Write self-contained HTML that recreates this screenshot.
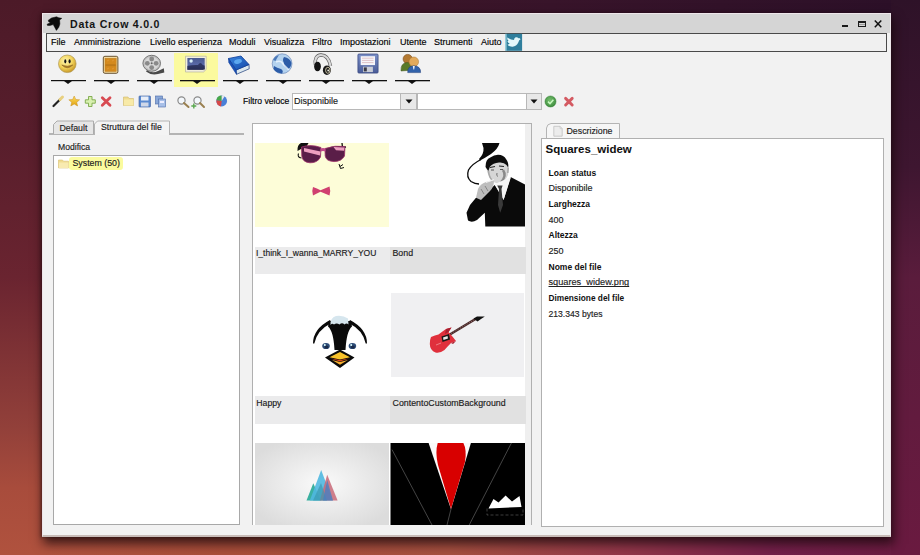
<!DOCTYPE html>
<html><head><meta charset="utf-8">
<style>
*{margin:0;padding:0;box-sizing:border-box}
html,body{width:920px;height:555px;overflow:hidden}
body{position:relative;font-family:"Liberation Sans",sans-serif;background:#5a1c34}
.a{position:absolute}
.t{position:absolute;white-space:nowrap;font-family:"Liberation Sans",sans-serif;color:#1a1a1a;-webkit-text-stroke:0.15px currentColor}
#bgL{left:0;top:0;width:42px;height:555px;background:linear-gradient(to bottom,#4c1a28 0%,#581e2c 25%,#6a2430 50%,#92403a 77%,#a84c3c 88%,#b0523e 100%)}
#bgR{left:891px;top:0;width:29px;height:555px;background:linear-gradient(to bottom,#2e1228 0%,#3e1630 30%,#5a1c3c 50%,#6a1a40 100%)}
#bgT{left:42px;top:0;width:849px;height:13px;background:linear-gradient(to right,#4c1a28 0%,#3e1626 30%,#38142a 60%,#2c1028 100%)}
#bgB{left:42px;top:536px;width:849px;height:19px;background:linear-gradient(to right,#b0523e 0%,#aa4e3a 22%,#a65040 48%,#94384a 68%,#74204a 86%,#6c1c42 100%)}
#shB{left:42px;top:536px;width:855px;height:19px;background:linear-gradient(to bottom,rgba(40,15,12,.72) 0%,rgba(40,15,12,.38) 30%,rgba(40,15,12,.12) 70%,rgba(40,15,12,0) 100%)}
#shR{left:891px;top:13px;width:6px;height:523px;background:linear-gradient(to right,rgba(20,5,15,.7),rgba(20,5,15,0))}
#win{left:42px;top:13px;width:849px;height:524px;background:#f2f2f2;border:1px solid #eee6ea;border-bottom:2px solid #c8bcb8;box-shadow:2px 6px 10px 1px rgba(25,8,12,.75),-1px 0 3px rgba(25,8,12,.45)}
#title{left:43px;top:14px;width:847px;height:19px;background:#d5d5d5}
#menubar{left:46px;top:33px;width:841px;height:19px;background:#f0f0f0;border:1px solid #4a4a4a}
.menu{font-size:9px;top:37px;color:#000}
</style></head><body>
<div class="a" id="bgL"></div>
<div class="a" id="bgR"></div>
<div class="a" id="bgT"></div>
<div class="a" id="bgB"></div>




<div class="a" id="win"></div>
<div class="a" id="title"></div>
<!-- crow logo -->
<svg class="a" style="left:45px;top:15px" width="18" height="17" viewBox="45 15 18 17">
<path d="M47.5 25.4 L47.1 24.2 L50.4 22.7 L48.7 21.8 L48.3 20.2 L51.5 18 L56.5 16.8 L58.8 17.8 L61.8 18.3 L59.6 20.1 L59.9 24 L58.8 27.3 L56.4 30.4 L54.8 27.4 L53.2 24.6 L50 25.5 Z" fill="#0c0c0c" stroke="#0c0c0c" stroke-width="0.5" stroke-linejoin="round"/>
</svg>
<div class="t" style="left:70px;top:17.7px;font-size:10.6px;font-weight:bold;letter-spacing:0.75px;color:#141414;-webkit-text-stroke:0">Data Crow 4.0.0</div>
<!-- window buttons -->
<div class="a" style="left:842px;top:25px;width:6px;height:2px;background:#1a1a1a"></div>
<div class="a" style="left:857.5px;top:21px;width:8px;height:6px;border:1px solid #1a1a1a;border-top-width:2px"></div>
<div class="a" style="left:858.5px;top:24px;width:6px;height:1px;background:#9a9a9a"></div>
<svg class="a" style="left:873px;top:19px" width="10" height="10" viewBox="0 0 10 10"><path d="M1.8 1.5 L8.3 8.3 M8.3 1.5 L1.8 8.3" stroke="#111" stroke-width="1.5"/></svg>

<div class="a" id="menubar"></div>
<div class="t menu" style="left:51px">File</div>
<div class="t menu" style="left:74px">Amministrazione</div>
<div class="t menu" style="left:150px">Livello esperienza</div>
<div class="t menu" style="left:229px">Moduli</div>
<div class="t menu" style="left:264px">Visualizza</div>
<div class="t menu" style="left:312px">Filtro</div>
<div class="t menu" style="left:340px">Impostazioni</div>
<div class="t menu" style="left:400px">Utente</div>
<div class="t menu" style="left:434px">Strumenti</div>
<div class="t menu" style="left:481px">Aiuto</div>
<svg class="a" style="left:505px;top:33px" width="18" height="18" viewBox="505 33 18 18">
<rect x="505.3" y="33.8" width="16.8" height="17" fill="#2f7e9c"/>
<rect x="505.3" y="33.8" width="1.2" height="17" fill="#a8dce8"/>
<path d="M507.5 44.8 Q509 46.8 512.5 46.7 Q516.5 46.3 518.3 42.6 L519.2 40.2 L520.8 39.6 L519.6 39.1 L520.3 38.1 L518.6 38.3 Q517.4 36.9 515.7 37.3 Q513.9 38 514.1 40 Q510.6 39.8 507.2 37.5 Q507 39.7 508.6 40.9 L507.4 41 Q508 43 509.8 43.6 Q508.7 44.4 507.5 44.8 Z" fill="#e4f8fb"/>
</svg>


<!-- main toolbar -->
<div class="a" style="left:174px;top:53px;width:44px;height:34px;background:#fbfa9e"></div>
<svg class="a" style="left:44px;top:52px" width="390" height="36" viewBox="44 52 390 36">
<defs>
<radialGradient id="gSm" cx="40%" cy="35%" r="65%"><stop offset="0" stop-color="#fff6b0"/><stop offset="0.6" stop-color="#f2d35a"/><stop offset="1" stop-color="#c99a2a"/></radialGradient>
<radialGradient id="gGl" cx="40%" cy="35%" r="70%"><stop offset="0" stop-color="#cfe3f8"/><stop offset="0.5" stop-color="#5a8fd0"/><stop offset="1" stop-color="#2a4f98"/></radialGradient>
<linearGradient id="gImg" x1="0" y1="0" x2="0" y2="1"><stop offset="0" stop-color="#4a5a90"/><stop offset="0.6" stop-color="#5a6aa8"/><stop offset="1" stop-color="#1e2448"/></linearGradient>
<linearGradient id="gBk" x1="0" y1="0" x2="1" y2="1"><stop offset="0" stop-color="#3a86e0"/><stop offset="1" stop-color="#1248a8"/></linearGradient>
<linearGradient id="gFl" x1="0" y1="0" x2="0" y2="1"><stop offset="0" stop-color="#7c90c8"/><stop offset="1" stop-color="#4a5c98"/></linearGradient>
</defs>
<!-- underline bars with triangles -->
<g fill="#111">
<rect x="51" y="80" width="35" height="1.2"/><path d="M64 81 L72 81 L68 84 Z"/>
<rect x="94" y="80" width="35" height="1.3"/><path d="M107 81 L115 81 L111 84 Z"/>
<rect x="137" y="80" width="35" height="1.3"/><path d="M150 81 L158 81 L154 84 Z"/>
<rect x="180" y="80" width="35" height="1.3"/><path d="M193 81 L201 81 L197 84 Z"/>
<rect x="223" y="80" width="35" height="1.3"/><path d="M236 81 L244 81 L240 84 Z"/>
<rect x="266" y="80" width="35" height="1.3"/><path d="M279 81 L287 81 L283 84 Z"/>
<rect x="309" y="80" width="35" height="1.3"/><path d="M322 81 L330 81 L326 84 Z"/>
<rect x="352" y="80" width="35" height="1.3"/><path d="M365 81 L373 81 L369 84 Z"/>
<rect x="395" y="80" width="35" height="1.3"/><path d="M408 81 L416 81 L412 84 Z"/>
</g>
<!-- smiley -->
<circle cx="67.3" cy="63.8" r="8.8" fill="url(#gSm)" stroke="#b09850" stroke-width="0.7"/>
<ellipse cx="65.3" cy="61.3" rx="1.05" ry="2.1" fill="#151515"/><ellipse cx="69.6" cy="61.3" rx="1.05" ry="2.1" fill="#151515"/>
<path d="M61.8 65 Q67.3 70.5 72.8 65 Q67.3 67.5 61.8 65 Z" fill="#a87a28" stroke="#8a6020" stroke-width="0.6"/>
<!-- book brown -->
<rect x="103.3" y="56.3" width="14.6" height="17" rx="1.6" fill="#f0d8a0" stroke="#5a4424" stroke-width="0.9"/>
<rect x="105" y="58.2" width="11.2" height="13.3" fill="#d48a1e" stroke="#b87a20" stroke-width="0.4"/>
<path d="M105.5 64.7 H115.7 M105.5 65.6 H115.7" stroke="#a86a18" stroke-width="0.5"/>
<path d="M107 61 L109 60 M112 61 L114 60 M107 69 L109 68 M112 69 L114 68" stroke="#e8a040" stroke-width="0.6"/>
<!-- film reel -->
<path d="M147 70 Q152 74 158 71 L163.8 68.2 L164.3 72.4 L158 74 Q151 75.5 146 71.5 Z" fill="#4a4a4a"/>
<ellipse cx="151.7" cy="63.3" rx="8.8" ry="8" fill="#c4c4c4" stroke="#6a6a6a" stroke-width="0.9"/>
<ellipse cx="151.7" cy="63.3" rx="7" ry="6.3" fill="#d8d8d8"/>
<circle cx="151.7" cy="59" r="2.4" fill="#8a8a8a"/><circle cx="151.7" cy="67.6" r="2.4" fill="#8a8a8a"/>
<circle cx="147.3" cy="63.3" r="2.4" fill="#8a8a8a"/><circle cx="156.1" cy="63.3" r="2.4" fill="#8a8a8a"/>
<circle cx="151.7" cy="63.3" r="1" fill="#666"/>
<!-- image icon -->
<path d="M185.5 56.2 H206.2 V69.5 L203.5 72 H185.5 Z" fill="#f2efdc" stroke="#b8b4a0" stroke-width="0.7"/>
<rect x="187.4" y="58" width="17.3" height="11.7" fill="url(#gImg)"/>
<circle cx="191.1" cy="61" r="1.7" fill="#d8eef8"/>
<path d="M187.4 66 Q194 64.5 198 65 Q200 62 201.5 63.5 Q203 66 204.7 65.5 L204.7 69.7 L187.4 69.7 Z" fill="#2a3058" opacity="0.85"/>
<path d="M203.5 72 L203.5 69.5 L206.2 69.5 Z" fill="#d8d4c0"/>
<!-- blue book -->
<path d="M236 70 L249 64.5 L249.2 68.8 L236.5 74.3 Z" fill="#dce8ee" stroke="#1a3a78" stroke-width="0.7"/>
<path d="M228.5 58.5 L241 56 L249 64.5 L236 70 Z" fill="url(#gBk)" stroke="#0e3c98" stroke-width="0.8"/>
<path d="M228.5 58.5 L228.8 62.5 L236.5 74.3 L236 70 Z" fill="#1a52b8" stroke="#0e3c98" stroke-width="0.6"/>
<ellipse cx="238" cy="61.5" rx="4" ry="2.2" fill="#70c0ff" opacity="0.7" transform="rotate(-15 238 61.5)"/>
<!-- globe -->
<circle cx="282.1" cy="63.7" r="9.9" fill="#b4d2ee" stroke="#5a7ab0" stroke-width="0.6"/>
<path d="M284 57 Q290 58 291.5 63 Q291 68 288 69 Q284 67 284 63 Q282 60 284 57 Z" fill="#2c5ca8"/>
<path d="M274 66 Q277 68 281 69 Q284 71 282 73.5 Q276 73 273.5 69 Z" fill="#2c5ca8"/>
<path d="M273 60 Q275 56 279 55 Q277 58 275.5 61 Z" fill="#4a78b8"/>
<path d="M276 62 Q281 60 283 64 Q286 67 289 70" stroke="#f0f8ff" stroke-width="1.5" fill="none" opacity="0.8"/>
<!-- headphones -->
<path d="M315.5 65 Q314 55.5 321 55 Q328.5 55 330.5 66" stroke="#5a5a5a" stroke-width="3.4" fill="none"/>
<path d="M315.5 65 Q314 55.5 321 55 Q328.5 55 330.5 66" stroke="#d8d8d8" stroke-width="2.2" fill="none"/>
<ellipse cx="317.5" cy="66.5" rx="3.4" ry="4.8" fill="#141414"/>
<ellipse cx="326.9" cy="70.2" rx="4" ry="4.8" fill="#1a1a1a"/>
<ellipse cx="327.8" cy="70.3" rx="2.2" ry="3" fill="none" stroke="#d8d0b0" stroke-width="0.9"/>
<circle cx="328.2" cy="70.5" r="0.9" fill="#f0f0e0"/>
<!-- floppy -->
<rect x="357.9" y="54" width="20.2" height="19.1" rx="1" fill="url(#gFl)" stroke="#34447c" stroke-width="0.7"/>
<rect x="360.7" y="56.2" width="14.3" height="8.9" fill="#f6f6fa"/>
<path d="M362 58.2 H373.5 M362 60.4 H373.5 M362 62.6 H373.5" stroke="#c89098" stroke-width="0.5"/>
<rect x="363" y="66.7" width="9.9" height="5.4" fill="#c8ccd6"/>
<rect x="363.8" y="67.4" width="3" height="4" fill="#3a3a48"/>
<!-- people -->
<circle cx="407.7" cy="59" r="4.6" fill="#b47a32" stroke="#7a4a18" stroke-width="0.6"/>
<path d="M401 71 Q400.5 63 407 62.5 Q412.5 62.5 413 70 Z" fill="#5a7a28" stroke="#3a5018" stroke-width="0.5"/>
<circle cx="413.8" cy="61.8" r="4.8" fill="#e2aa5c" stroke="#a87430" stroke-width="0.5"/>
<path d="M407.7 72.6 Q407.5 66 413.8 65.8 Q420.8 66 420.6 72.6 Z" fill="#3262aa" stroke="#1a3a78" stroke-width="0.5"/>
<path d="M412.8 66 L414.8 66 L414.2 69.5 L413.4 69.5 Z" fill="#e8eef8"/>
</svg>


<!-- second toolbar -->
<svg class="a" style="left:50px;top:93px" width="180" height="16" viewBox="50 93 180 16">
<defs>
<linearGradient id="gStar" x1="0" y1="0" x2="0" y2="1"><stop offset="0" stop-color="#ffe060"/><stop offset="1" stop-color="#e0a010"/></linearGradient>
<radialGradient id="gPie" cx="40%" cy="35%" r="70%"><stop offset="0" stop-color="#ffffff"/><stop offset="1" stop-color="#888"/></radialGradient>
</defs>
<!-- wand -->
<path d="M53.5 106 L60 99.5" stroke="#222" stroke-width="2.2" stroke-linecap="round"/>
<path d="M60 99.5 L62.5 97" stroke="#e8d080" stroke-width="3" stroke-linecap="round"/>
<!-- star -->
<path d="M74.2 96 L75.8 99.5 L79.6 99.8 L76.7 102.3 L77.6 106 L74.2 104 L70.8 106 L71.7 102.3 L68.8 99.8 L72.6 99.5 Z" fill="url(#gStar)" stroke="#c89020" stroke-width="0.5"/>
<!-- plus -->
<path d="M88.5 96.5 H92 V99.8 H95.3 V103.2 H92 V106.5 H88.5 V103.2 H85.3 V99.8 H88.5 Z" fill="#d8f0b0" stroke="#7aa848" stroke-width="0.9"/>
<!-- red x -->
<path d="M102.3 97.8 L110 105.3 M110 97.8 L102.3 105.3" stroke="#d84a52" stroke-width="2.8" stroke-linecap="round"/>
<!-- folder -->
<path d="M123.5 97 H128 L129 98.5 H133.5 V105.5 H123.5 Z" fill="#f0dc90" stroke="#d0b868" stroke-width="0.6"/>
<rect x="124" y="99.5" width="9.5" height="6" fill="#f8eaa8"/>
<!-- floppy -->
<rect x="139" y="96" width="11.5" height="11" rx="0.8" fill="#5a8ad0" stroke="#3a5aa0" stroke-width="0.6"/>
<rect x="141" y="96.5" width="7.5" height="4" fill="#e8eef8"/>
<rect x="141" y="102.5" width="7.5" height="4" fill="#d0d8e8"/>
<!-- copy -->
<rect x="155.5" y="96" width="7" height="8" fill="#8aa8d8" stroke="#4a6aa8" stroke-width="0.6"/>
<rect x="158.5" y="99" width="7" height="8" fill="#a8c0e8" stroke="#4a6aa8" stroke-width="0.6"/>
<rect x="160" y="101" width="4" height="2" fill="#eef"/>
<!-- magnifier -->
<circle cx="181.5" cy="100.5" r="3.6" fill="#f4f8fc" stroke="#8a8a8a" stroke-width="1.2"/>
<path d="M184 103 L188.5 107" stroke="#9a8050" stroke-width="2" stroke-linecap="round"/>
<!-- magnifier plus -->
<circle cx="197.5" cy="100.5" r="3.6" fill="#f4f8fc" stroke="#8a8a8a" stroke-width="1.2"/>
<path d="M200 103 L204 107" stroke="#9a8050" stroke-width="2" stroke-linecap="round"/>
<path d="M193.8 103.5 V108.5 M191.3 106 H196.3" stroke="#5aa850" stroke-width="1.4"/>
<!-- pie -->
<circle cx="221.7" cy="101" r="5.4" fill="#4a80d8"/>
<path d="M221.7 101 L221.7 95.6 A5.4 5.4 0 0 0 216.4 100.2 Z" fill="#48a848"/>
<path d="M221.7 101 L216.4 100.2 A5.4 5.4 0 0 0 221 106.4 Z" fill="#d84848"/>
<path d="M221.7 101 L221.7 95.6 A5.4 5.4 0 0 1 224.5 96.4 Z" fill="#e8e8e8"/>
</svg>
<div class="t" style="left:243px;top:96px;font-size:8.6px;color:#000">Filtro veloce</div>
<!-- combo 1 -->
<div class="a" style="left:292px;top:93px;width:125px;height:17px;background:#fff;border:1px solid #b8b8b8"></div>
<div class="a" style="left:400px;top:93px;width:17px;height:17px;background:#e8e8e8;border:1px solid #b8b8b8"></div>
<svg class="a" style="left:405px;top:99px" width="8" height="5" viewBox="0 0 8 5"><path d="M0.5 0.5 H7.5 L4 4.5 Z" fill="#111"/></svg>
<div class="t" style="left:294px;top:96px;font-size:9px;color:#1a1a1a">Disponibile</div>
<!-- combo 2 -->
<div class="a" style="left:417px;top:93px;width:125px;height:17px;background:#fff;border:1px solid #b8b8b8"></div>
<div class="a" style="left:526px;top:93px;width:16px;height:17px;background:#e8e8e8;border:1px solid #b8b8b8"></div>
<svg class="a" style="left:530px;top:99px" width="8" height="5" viewBox="0 0 8 5"><path d="M0.5 0.5 H7.5 L4 4.5 Z" fill="#111"/></svg>
<!-- ok / cancel -->
<svg class="a" style="left:543px;top:94px" width="35" height="15" viewBox="543 94 35 15">
<defs><radialGradient id="gOk" cx="45%" cy="40%" r="65%"><stop offset="0" stop-color="#78c070"/><stop offset="1" stop-color="#3a8a3a"/></radialGradient></defs>
<circle cx="550.5" cy="101.5" r="5.5" fill="url(#gOk)" stroke="#2a7a2a" stroke-width="0.5"/>
<path d="M548 101.6 L550 103.6 L553.4 99.8" stroke="#c8f8c0" stroke-width="1.5" fill="none"/>
<path d="M565.6 98.4 L572.2 105 M572.2 98.4 L565.6 105" stroke="#d45a62" stroke-width="2.9" stroke-linecap="round"/>
</svg>


<!-- left tabs -->
<div class="a" style="left:49px;top:133px;width:195px;height:2px;background:#b4b4b4"></div>
<svg class="a" style="left:49px;top:119px" width="125" height="17" viewBox="49 119 125 17">
<path d="M53.5 134 V124.5 L57 121 H93.5 V134" fill="#e6e6e6" stroke="#acacac" stroke-width="1"/>
<path d="M94.5 134 V124 L97.5 121 H169.5 V134" fill="#f4f4f4" stroke="#b4b4b4" stroke-width="1"/>
</svg>
<div class="a" style="left:95px;top:133px;width:74px;height:2px;background:#f4f4f4"></div>
<div class="t" style="left:59.5px;top:123px;font-size:8.8px;color:#222">Default</div>
<div class="t" style="left:101px;top:122.3px;font-size:8.7px;color:#1a1a1a">Struttura del file</div>
<div class="t" style="left:58px;top:141.5px;font-size:8.6px;color:#1a1a1a">Modifica</div>
<!-- tree box -->
<div class="a" style="left:53px;top:155px;width:187px;height:370px;background:#fff;border:1px solid #a8a8a8"></div>
<div class="a" style="left:69px;top:156.5px;width:54px;height:13px;background:#fbfb9e;border-radius:3px"></div>
<svg class="a" style="left:58px;top:159px" width="12" height="10" viewBox="0 0 12 10">
<path d="M0.5 1 H4.5 L5.5 2.2 H10.5 V9 H0.5 Z" fill="#f0dc90" stroke="#d8c070" stroke-width="0.6"/>
<rect x="1" y="3.5" width="9.5" height="5.5" fill="#f8eab0"/>
</svg>
<div class="t" style="left:72.5px;top:158px;font-size:8.8px;color:#1a1a1a">System (50)</div>

<!-- center panel -->
<div class="a" style="left:252px;top:123px;width:280px;height:402px;background:#fff;border:1px solid #b0b0b0;border-bottom:none"></div>
<div class="a" style="left:525px;top:124px;width:6px;height:401px;background:#efefef"></div>
<!-- right panel -->
<svg class="a" style="left:540px;top:122px" width="90" height="18" viewBox="540 122 90 18">
<path d="M546.5 139 V128 Q547 124 551 123.5 H619.5 V139" fill="#f6f6f6" stroke="#b4b4b4" stroke-width="1"/>
<path d="M553.8 126.3 H560 L562.2 128.6 V136.2 H553.8 Z" fill="#ececec" stroke="#c0c0c0" stroke-width="0.8"/>
<path d="M560 126.3 V128.6 H562.2" fill="none" stroke="#c8c8c8" stroke-width="0.6"/>
</svg>
<div class="a" style="left:541px;top:138px;width:343px;height:389px;background:#fff;border:1px solid #b0b0b0"></div>
<div class="t" style="left:566.5px;top:126px;font-size:8.8px;color:#222">Descrizione</div>
<div class="t" style="left:545.5px;top:143px;font-size:11.5px;font-weight:bold;color:#111;-webkit-text-stroke:0">Squares_widew</div>
<div class="t" style="left:548.5px;top:167.5px;font-size:8.5px;font-weight:bold;color:#111;-webkit-text-stroke:0">Loan status</div>
<div class="t" style="left:548.5px;top:183px;font-size:9px;color:#222">Disponibile</div>
<div class="t" style="left:548.5px;top:199px;font-size:8.5px;font-weight:bold;color:#111;-webkit-text-stroke:0">Larghezza</div>
<div class="t" style="left:548.5px;top:214.5px;font-size:9px;color:#222">400</div>
<div class="t" style="left:548.5px;top:230px;font-size:8.5px;font-weight:bold;color:#111;-webkit-text-stroke:0">Altezza</div>
<div class="t" style="left:548.5px;top:246px;font-size:9px;color:#222">250</div>
<div class="t" style="left:548.5px;top:261.5px;font-size:8.5px;font-weight:bold;color:#111;-webkit-text-stroke:0">Nome del file</div>
<div class="t" style="left:548.5px;top:277px;font-size:9.2px;color:#222;text-decoration:underline;text-decoration-skip-ink:none;text-underline-offset:1px">squares_widew.png</div>
<div class="t" style="left:548.5px;top:293px;font-size:8.3px;font-weight:bold;color:#111;-webkit-text-stroke:0">Dimensione del file</div>
<div class="t" style="left:548.5px;top:308.5px;font-size:8.6px;color:#222">213.343 bytes</div>


<!-- center images -->
<svg class="a" style="left:253px;top:124px" width="278" height="401" viewBox="253 124 278 401">
<defs>
<radialGradient id="gMt" cx="50%" cy="50%" r="60%"><stop offset="0" stop-color="#fafafa"/><stop offset="1" stop-color="#dcdcdc"/></radialGradient>
</defs>
<!-- cell 1 : glasses -->
<rect x="255" y="143" width="134" height="84" fill="#fdfdd8"/>
<path d="M297.5 151 Q297 145 301 143 L308.5 143 L306 147.5 L301 149 Z" fill="#111"/>
<path d="M298.5 153.5 Q297 157.5 301.5 158" stroke="#111" stroke-width="1.1" fill="none"/>
<path d="M342 143 L342.5 147.5 L346 147" stroke="#111" stroke-width="1.3" fill="none"/>
<path d="M339 164 L340.5 168.5 L344 167.5 M340 166.5 L343 164.5" stroke="#111" stroke-width="1" fill="none"/>
<path d="M301.5 147 Q311 144 321 147.5 L320.5 157 Q317.5 163 310 162.8 Q302.5 162.3 301.8 156 Z" fill="#5a1e48" stroke="#9a2e68" stroke-width="0.8"/>
<path d="M325 148.5 Q335 145 345 146.5 L344.5 156 Q341.5 161.5 334 161.6 Q326 161.2 325.2 156 Z" fill="#5a1e48" stroke="#9a2e68" stroke-width="0.8"/>
<path d="M320.5 148.5 Q323 147.5 325.5 148.5 L325.5 151.5 Q323 150.5 320.5 151.5 Z" fill="#c04888"/>
<path d="M304 148 L320.5 151.5 L320 155.5 L304 151.5 Z" fill="#eea0c0"/>
<path d="M333.5 147 L344.5 147.5 L344 150.8 L336 150.2 Z" fill="#eea0c0"/>
<path d="M313 187 Q317 188.5 320.5 190.2 Q324.5 188.5 329.5 186.5 Q331 191 329.5 195.5 Q324.5 193.5 320.5 191.8 Q317 193.5 313 195.5 Q311.5 191 313 187 Z" fill="#d04070"/>
<!-- cell 2 : bond -->
<path d="M482 143 L499.5 143 Q498 149 491 154 Q485 158 480 160.5 L479 159 Q484 154 483.5 148 Z" fill="#0a0a0a"/>
<path d="M481 159.5 Q472 164 468.5 170 Q466 177 471 181.5 Q475 184 479 184" stroke="#0a0a0a" stroke-width="1.3" fill="none"/>
<path d="M486 167 Q487 160 493 158 Q501 156 506 160 Q509 164 508.5 170 L508 175 Q505 182 500.5 183.5 Q494 184 490 178 Q487 173 486 167 Z" fill="#d6d6d6"/>
<path d="M485.5 167 Q485.5 159 490.3 157.5 Q494 154.8 498 154.8 Q504 155 506 159 Q509 163 508.2 167.5 L506.5 165 Q504 162 499 162.5 Q493 163 490 166.5 L488.3 171 Z" fill="#0c0c0c"/>
<path d="M490 167.5 L495 166.5 M499 166 L504 166.5" stroke="#222" stroke-width="1.2"/>
<path d="M491 170 L494 170 M500 169.5 L503 169.5" stroke="#555" stroke-width="1"/>
<path d="M497 173 Q496 176 498 176.5" stroke="#666" stroke-width="0.9" fill="none"/>
<path d="M503 170 Q507 176 501 182" stroke="#8a8a8a" stroke-width="2.4" fill="none"/><path d="M488.5 171 Q489 177 492 180" stroke="#a8a8a8" stroke-width="1.6" fill="none"/>
<path d="M507.5 167 L509 168 L508.5 173 L507 173 Z" fill="#aaa"/>
<path d="M525 184.4 L510.6 177 L503.6 199.8 L494.7 184.9 L486.8 192.8 L484 196 L476 197.8 L470 205 L466.5 212.7 L468 220.6 Q472 223 477 220 L484.8 212.7 L485.3 226.5 L525 226.5 Z" fill="#0a0a0a"/>
<path d="M494.7 184 L511 177 L503.6 200 Z" fill="#f6f6f6"/>
<path d="M497.2 185.4 L502.6 185.4 L501.5 189 L503 205 L500.2 212.7 L498 205 L499 189 Z" fill="#3a3a3a"/>
<path d="M476 197.8 L478 189 Q480 184 486 182 L494 180.5 Q494 187 490 191 Q486 195 481 200 Z" fill="#bdbdbd"/>
<path d="M481 189 L484 194 M485 186 L488 191" stroke="#777" stroke-width="0.8"/>
<path d="M486 182.5 L494 179.5" stroke="#f0f0f0" stroke-width="1.2"/>
<!-- labels row 1 -->
<rect x="255" y="247" width="135" height="27" fill="#ebebec"/>
<rect x="390" y="247" width="136" height="27" fill="#e1e1e1"/>
<!-- cell 3 : penguin -->
<path d="M313 343.5 Q313 329 330 320 L331.5 323 Q317 330 314.3 343.5 Z" fill="#0a0a0a"/>
<path d="M367 343.5 Q367 329 350 320 L348.5 323 Q363 330 365.7 343.5 Z" fill="#0a0a0a"/>
<path d="M329 321 L351 321 L352 326.5 Q346.5 331 345.5 350 L334.5 350 Q333.5 331 328 326.5 Z" fill="#0a0a0a"/>
<path d="M330.5 325 Q330 318 336 316 Q343 315 348 318.5 L348.5 324.5 Q346.5 322.5 344.5 324.5 Q342 322 339.5 324.5 Q336.5 322.5 334 324.5 Q332 323 330.5 325 Z" fill="#d6e6ee"/>
<ellipse cx="326" cy="346" rx="3.8" ry="3.1" fill="#2c4c78"/><ellipse cx="326.5" cy="347" rx="2" ry="1.6" fill="#1a2a48"/><circle cx="324.8" cy="345" r="1" fill="#dff"/>
<ellipse cx="352.4" cy="346" rx="3.8" ry="3.1" fill="#2c4c78"/><ellipse cx="352.9" cy="347" rx="2" ry="1.6" fill="#1a2a48"/><circle cx="351.2" cy="345" r="1" fill="#dff"/>
<path d="M325 357.5 L340 349.5 L354.5 357.5 L340 368 Z" fill="#0a0a0a"/>
<path d="M329.5 357.3 L340 352 L350 357.3 L340 359.5 Z" fill="#f8c22a"/>
<path d="M330.5 358.5 L340 360 L349 358.5 L340 361.5 Z" fill="#e04a1a"/>
<path d="M332 360 L340 362 L348 360 L340 364.8 Z" fill="#f8b030"/>
<!-- cell 4 : guitar -->
<rect x="391" y="293" width="133" height="84" fill="#f0f0f2"/>
<path d="M449 335 L475.5 319" stroke="#4a2a2a" stroke-width="2.6"/>
<path d="M451 333.5 L474 320" stroke="#c8a0a0" stroke-width="0.6" stroke-dasharray="1 1.6"/>
<path d="M473.5 318.5 L477 316.5 L484.8 316.6 L481 319 L477.5 321.5 Z" fill="#111"/>
<path d="M431 337 Q435 335 438.5 334.5 Q443 331 446 329 L451.5 327.5 L448.5 332 L452 336 L456 341 L451 343 Q447 347 444.5 350 Q440 353.5 435.5 352.5 Q430 350.5 429.8 344 Q429.8 339.5 431 337 Z" fill="#e0303c"/>
<path d="M446 329 L451.5 327.5 L448.5 332 L445 334 Z M451 343 L456 341 L453 344 Z" fill="#a82030"/>
<path d="M441.5 336.5 L449 334 L450 339.5 L442.5 342 Z" fill="#1a1a1a"/>
<path d="M443 337.5 L447.5 336 L448 338.5 L443.5 340 Z" fill="#e8e8e8"/>
<path d="M436 345 L441 343" stroke="#f0a0a0" stroke-width="0.7"/>
<!-- labels row 2 -->
<rect x="255" y="396" width="135" height="28" fill="#ebebec"/>
<rect x="390" y="396" width="136" height="28" fill="#e1e1e1"/>
<!-- cell 5 : mountains -->
<rect x="255" y="443" width="134" height="82" fill="url(#gMt)"/>
<path d="M306.5 500.5 L313.3 483.3 L320.8 500.5 Z" fill="#3ab0a0"/>
<path d="M309.8 500.5 L321.2 470 L332.7 500.5 Z" fill="#50b8e0" opacity="0.9"/>
<path d="M319.8 500.5 L327.2 474.8 L337.6 500.5 Z" fill="#c86878" opacity="0.85"/>
<path d="M313 500.5 L321 483 L327 500.5 Z" fill="#3a98b0" opacity="0.7"/>
<path d="M323 500.5 L327.2 480 L333 500.5 Z" fill="#4a80c0" opacity="0.8"/>
<!-- cell 6 : suit -->
<rect x="390.5" y="443" width="134.5" height="82" fill="#000"/>
<path d="M428.6 443 L470.9 443 L451 509.3 Z" fill="#fafafa"/>
<path d="M437.7 443 L463.4 443 Q467 450 465 462 L451 509 L438 465 Q435 452 437.7 443 Z" fill="#d80000"/>
<path d="M392 449.6 L432 525 M451 509 L447 525 M511.4 443 L469.2 525" stroke="#555" stroke-width="0.8"/>
<path d="M488.5 508.5 L493.5 499 L498.5 502.5 L505.6 495.5 L512 501.5 L519.5 496 L521.5 507 Z" fill="#fff"/>
<path d="M487 508.5 V515 H523 V508.5" stroke="#666" stroke-width="0.6" stroke-dasharray="3 2" fill="none"/>
</svg>
<div class="t" style="left:256px;top:247.7px;font-size:8.5px;color:#1a1a1a">I_think_I_wanna_MARRY_YOU</div>
<div class="t" style="left:392.5px;top:247.7px;font-size:8.8px;color:#1a1a1a">Bond</div>
<div class="t" style="left:256.3px;top:397.8px;font-size:8.7px;color:#1a1a1a">Happy</div>
<div class="t" style="left:392.6px;top:397.8px;font-size:8.8px;color:#1a1a1a">ContentoCustomBackground</div>

</body></html>
